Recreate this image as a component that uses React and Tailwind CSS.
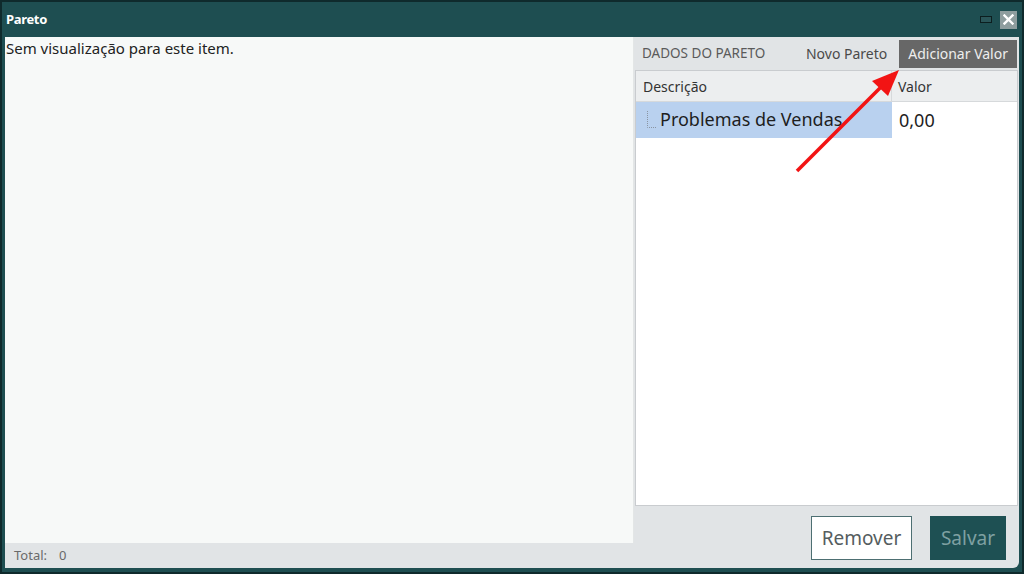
import React from 'react';

const font = { fontFamily: '"Noto Sans", "Open Sans", sans-serif' };

function TitleBar() {
  return (
    <div className="h-[35px] flex items-center pl-[4px] pr-[5px]">
      <span className="text-[13px] font-bold text-white tracking-tight">Pareto</span>
      <div className="ml-auto flex items-center gap-[8px]">
        <div className="w-[12px] h-[7px] border border-[#0c1e1f] bg-[#2a5558]" />
        <button className="w-[17px] h-[18px] bg-[#8e9d9e] flex items-center justify-center">
          <svg width="11" height="11" viewBox="0 0 11 11">
            <path d="M1.5 1.5 L9.5 9.5 M9.5 1.5 L1.5 9.5" stroke="#fff" strokeWidth="2.4" strokeLinecap="square" />
          </svg>
        </button>
      </div>
    </div>
  );
}

function TreeLine() {
  return (
    <svg width="10" height="18" viewBox="0 0 10 18" className="shrink-0">
      <path d="M1.5 0 V16.5 H10" stroke="#8a95a3" strokeWidth="1" strokeDasharray="1 1" fill="none" />
    </svg>
  );
}

function DataPanel() {
  return (
    <div className="w-[385px] flex flex-col">
      {/* header */}
      <div className="h-[33px] flex items-center pl-[8px] pr-[2px]">
        <span className="text-[13.5px] text-[#5a5a5a]">DADOS DO PARETO</span>
        <span className="ml-auto text-[14px] text-[#4a4a4a] mr-[12px]">Novo Pareto</span>
        <button className="h-[28px] px-[9px] bg-[#676767] text-[14px] text-[#eeeeee]">Adicionar Valor</button>
      </div>

      {/* table */}
      <div className="flex-1 mx-[1px] border border-[#c9cccf] bg-white flex flex-col">
        <div className="h-[31px] flex bg-[#eceeef] border-b border-[#d6d9db] text-[14px] text-[#333]">
          <div className="w-[256px] border-r border-[#d6d9db] flex items-center pl-[7px]">Descrição</div>
          <div className="flex-1 flex items-center pl-[6px]">Valor</div>
        </div>
        <div className="h-[36px] flex text-[18px] text-[#1e1e1e]">
          <div className="w-[256px] bg-[#b9d1ef] flex items-center pl-[10px] gap-[4px]">
            <TreeLine />
            <span className="-mt-[1px]">Problemas de Vendas</span>
          </div>
          <div className="flex-1 flex items-center pl-[7px]">0,00</div>
        </div>
      </div>

      {/* actions */}
      <div className="h-[62px] flex items-center justify-end gap-[18px] pr-[13px] pt-[2px]">
        <button className="h-[44px] w-[101px] bg-white border border-[#4d6f72] text-[19px] text-[#555d60]">Remover</button>
        <button className="h-[44px] w-[76px] bg-[#1e5053] text-[19px] text-[#7fa0a2]">Salvar</button>
      </div>
    </div>
  );
}

export default function App() {
  return (
    <div className="w-[1024px] h-[574px] bg-[#0f2a2c] p-[2px]" style={font}>
      <div className="w-full h-full bg-[#1e4e51] flex flex-col relative">
        <TitleBar />
        <div className="h-[531px] mx-[3px] bg-[#e1e4e6] rounded-br-[6px] flex">
          <div className="w-[629px] flex flex-col">
            <div className="flex-1 bg-[#f7f9f8] border-r border-[#e3e6e6] pl-[1px] pt-[1px]">
              <p className="text-[15px] text-[#222] leading-[20px]">Sem visualização para este item.</p>
            </div>
            <div className="h-[25px] flex items-center pl-[9px] text-[13px] text-[#6a6a6a]">
              <span>Total:</span>
              <span className="ml-[12px]">0</span>
            </div>
          </div>
          <DataPanel />
        </div>

        {/* pointer arrow */}
        <svg className="absolute left-0 top-0 pointer-events-none" width="1020" height="570">
          <line x1="795" y1="169" x2="881" y2="83" stroke="#f21414" strokeWidth="3.6" />
          <polygon points="897,68 870,79 886,94" fill="#f21414" />
        </svg>
      </div>
    </div>
  );
}
